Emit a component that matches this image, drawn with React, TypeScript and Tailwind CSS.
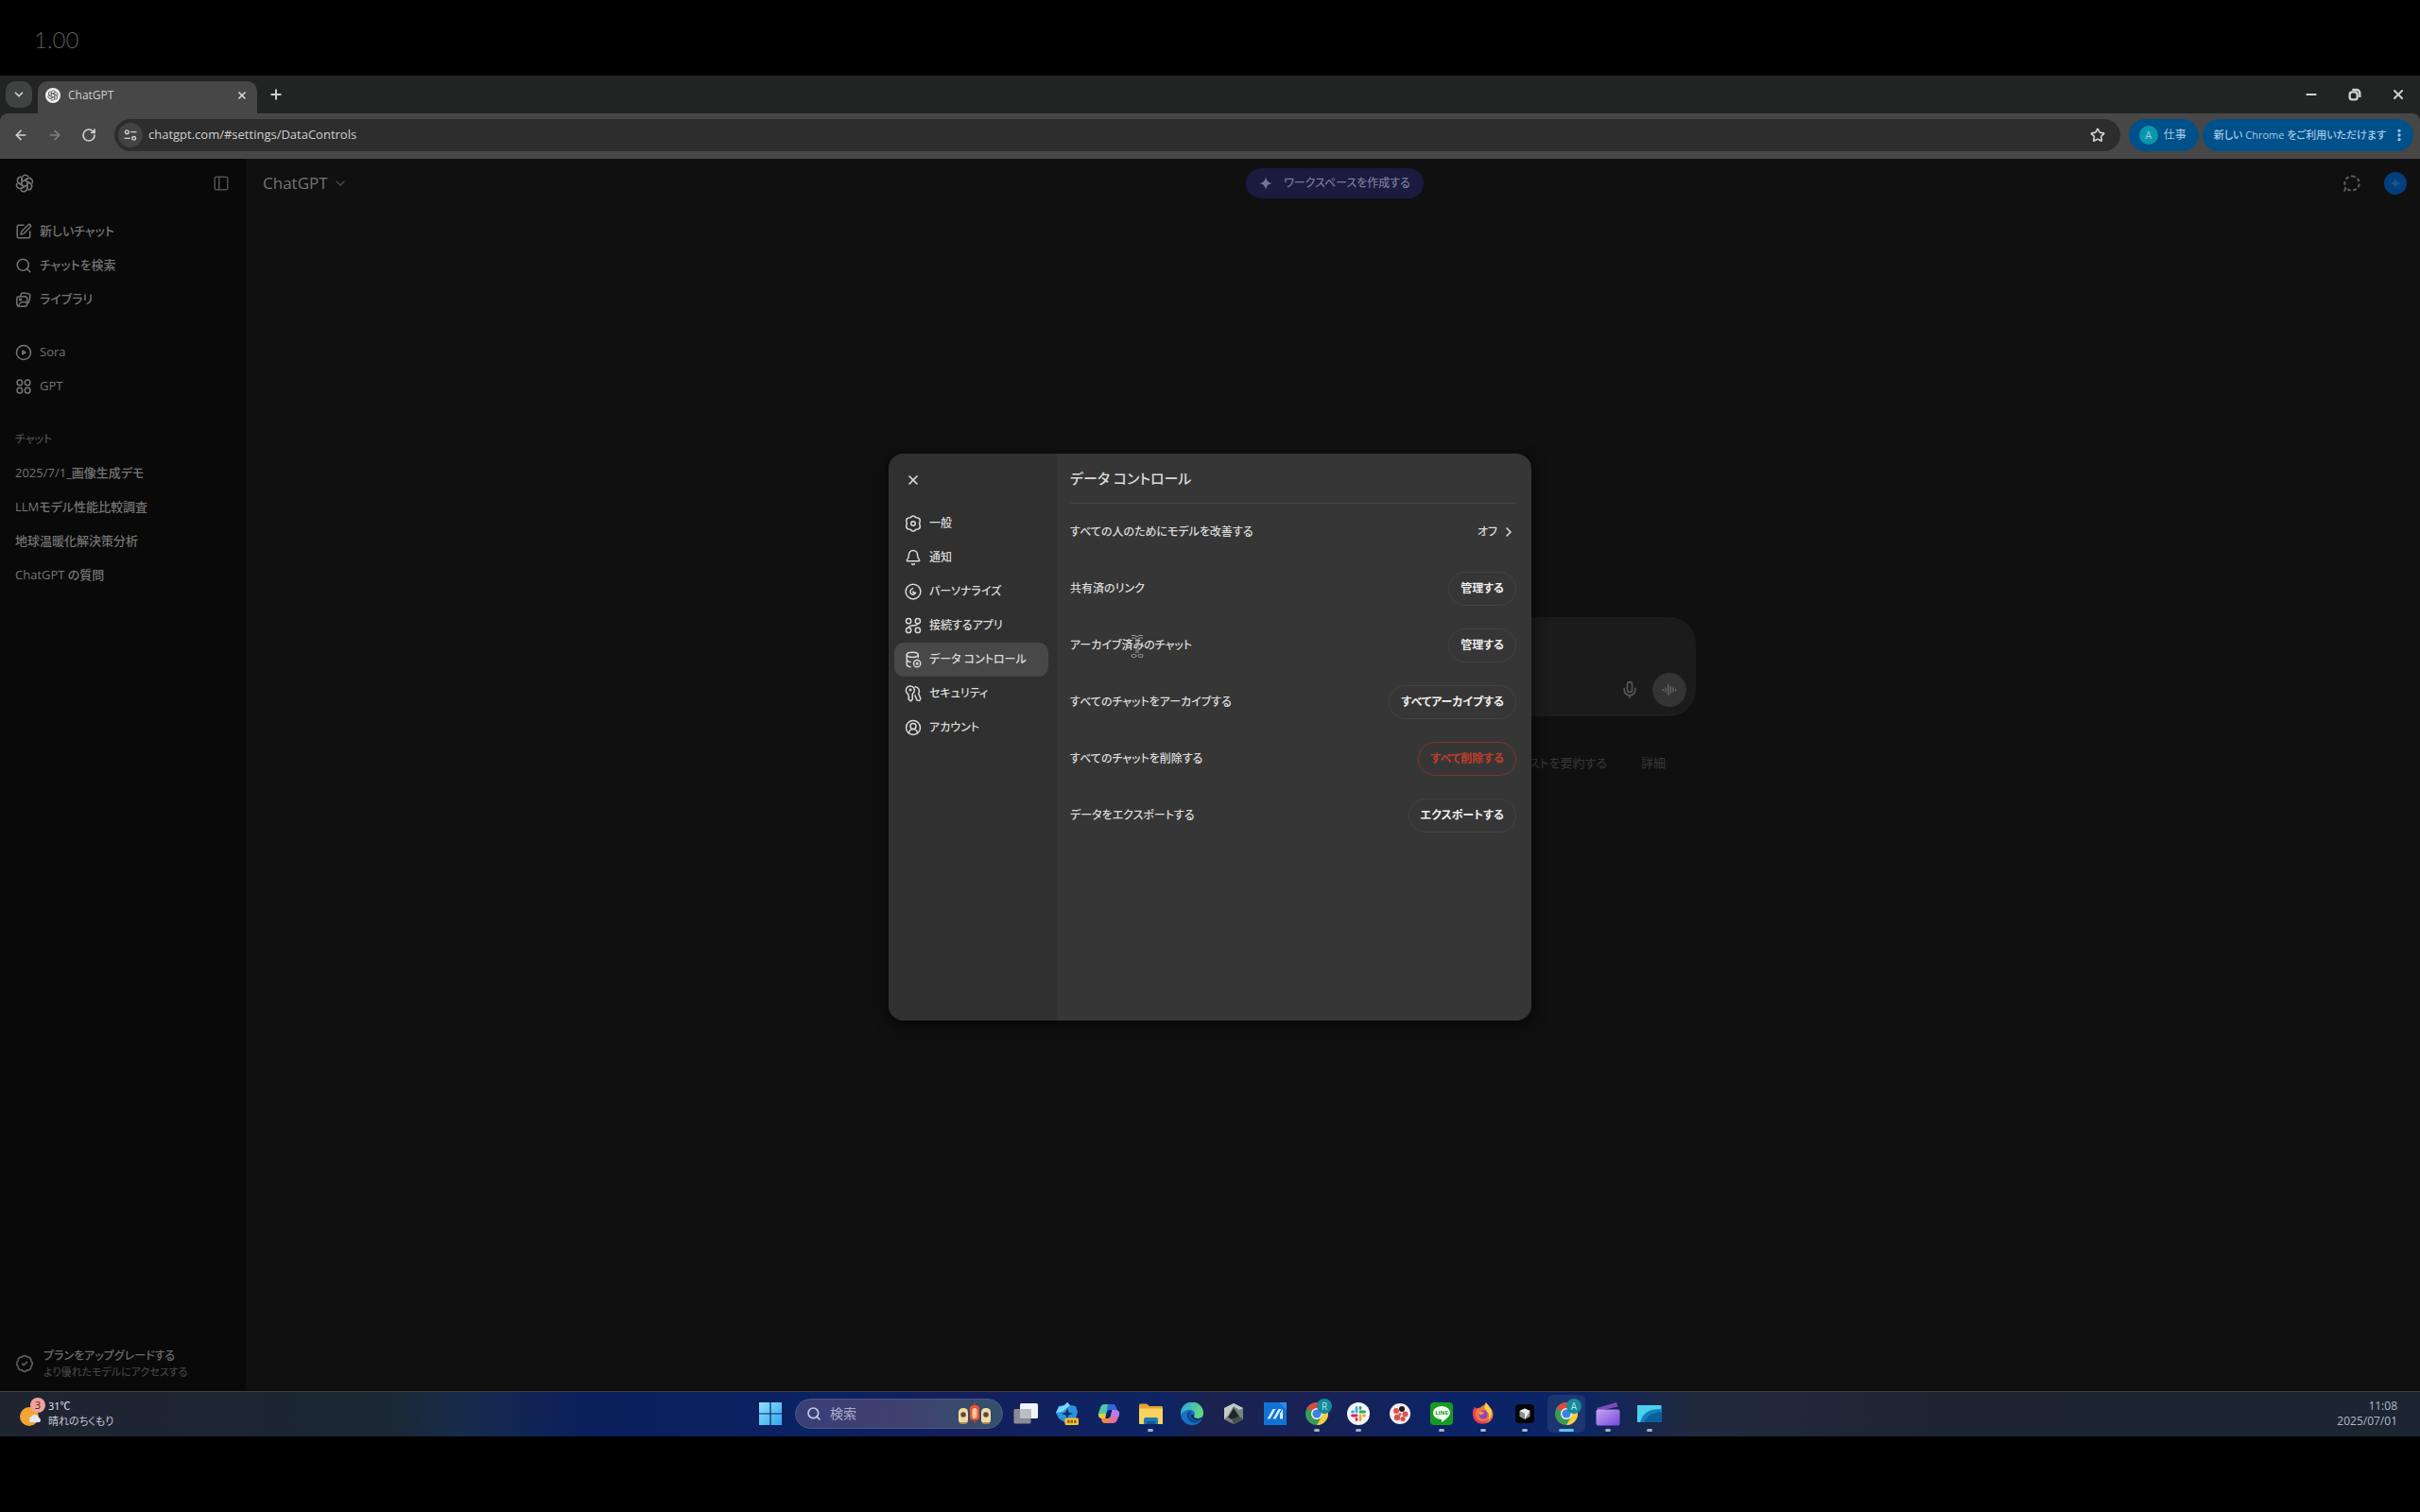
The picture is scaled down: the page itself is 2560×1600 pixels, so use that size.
import type { ReactNode } from 'react';
import {
  ArrowLeft,
  ArrowRight,
  BadgeCheck,
  Bell,
  ChevronDown,
  ChevronRight,
  CircleUserRound,
  EllipsisVertical,
  Mic,
  Minus,
  PanelLeft,
  Plus,
  RotateCw,
  Search,
  SquarePen,
  Star,
  X,
} from 'lucide-react';

interface IconProps {
  className?: string;
}

function Svg({ className, children }: IconProps & { children: ReactNode }) {
  return (
    <svg
      viewBox="0 0 24 24"
      fill="none"
      stroke="currentColor"
      strokeWidth="2"
      strokeLinecap="round"
      strokeLinejoin="round"
      className={className}
      aria-hidden="true"
    >
      {children}
    </svg>
  );
}

function OpenAiLogo({ className }: IconProps) {
  return (
    <Svg className={className}>
      {[0, 60, 120, 180, 240, 300].map(angle => (
        <path
          key={angle}
          transform={`rotate(${angle} 12 12)`}
          d="M12 8 L8.5 10 V5.4 A4.6 4.6 0 0 1 16.4 3 M12 8 L16.8 5.3"
        />
      ))}
    </Svg>
  );
}

function LibraryIcon({ className }: IconProps) {
  return (
    <Svg className={className}>
      <path d="M8 7V5.5A3 3 0 0 1 11.4 2.6l7 .9A3 3 0 0 1 21 7l-.9 7a3 3 0 0 1-2.6 2.6" />
      <rect x="2.5" y="7.5" width="14.5" height="14" rx="3.5" />
      <circle cx="7.5" cy="12" r="1.2" />
      <path d="M5 20.5c1.5-4.5 6-6.5 11.5-4" />
    </Svg>
  );
}

function SoraIcon({ className }: IconProps) {
  return (
    <Svg className={className}>
      <circle cx="12" cy="12" r="10" />
      <path d="M10.500 9.500 14.500 12 10.500 14.500z" fill="currentColor" />
    </Svg>
  );
}

function GptsIcon({ className }: IconProps) {
  return (
    <Svg className={className}>
      <circle cx="6.5" cy="6.5" r="3.7" />
      <circle cx="17.5" cy="6.5" r="3.7" />
      <circle cx="6.5" cy="17.5" r="3.7" />
      <circle cx="17.5" cy="17.5" r="3.7" />
    </Svg>
  );
}

function GeneralIcon({ className }: IconProps) {
  return (
    <Svg className={className}>
      <path d="M10 1.800a4 4 0 0 1 4 0l1.700 1.700 2.700.5c2.400.6 3.600 2.600 3.200 4.600L20.800 12l.8 3.400c.4 2-.8 4-3.200 4.600l-2.700.5L14 22.200a4 4 0 0 1-4 0l-1.700-1.700-2.700-.5c-2.400-.6-3.600-2.600-3.200-4.600L3.200 12l-.8-3.400C2 6.600 3.200 4.600 5.600 4l2.700-.5z" />
      <circle cx="12" cy="12" r="3" />
    </Svg>
  );
}

function PersonalizeIcon({ className }: IconProps) {
  return (
    <Svg className={className}>
      <circle cx="12" cy="12" r="10.5" />
      <path d="M11.500 7.500C8 9 7 12 8.500 14.500s5.500 2.500 7-1h-3.500v-1.500" />
    </Svg>
  );
}

function AppsIcon({ className }: IconProps) {
  return (
    <Svg className={className}>
      <circle cx="5.5" cy="5.5" r="3.5" />
      <circle cx="18.5" cy="5.5" r="3.5" />
      <circle cx="5.5" cy="18.5" r="3.5" />
      <circle cx="18.5" cy="18.5" r="3.5" />
      <path d="M5.500 15c0-5 13-1 13-6" />
    </Svg>
  );
}

function DataIcon({ className }: IconProps) {
  return (
    <Svg className={className}>
      <ellipse cx="11" cy="5" rx="8" ry="3.5" />
      <path d="M3 5v14c0 1.5 2 2.800 5 3.200M19 5v4M3 12c0 1.5 2 2.800 5 3.200" />
      <circle cx="17.5" cy="17.5" r="4.8" />
      <circle cx="17.5" cy="17.5" r="1" />
    </Svg>
  );
}

function SecurityIcon({ className }: IconProps) {
  return (
    <Svg className={className}>
      <path d="M5 12.500A6 6 0 1 1 11 12.300V20l-2.500 2.500L5.500 20v-2l1-1-1-1z" />
      <circle cx="8" cy="6.8" r="1" />
      <path d="M14.500 2.500a6 6 0 0 1 5 9.500l3 7-1.500 3-3.500-.5-3-7" />
    </Svg>
  );
}

function TuneIcon({ className }: IconProps) {
  return (
    <Svg className={className}>
      <circle cx="6.5" cy="7" r="2.8" />
      <path d="M13 7h8M3 17h8" />
      <circle cx="17.5" cy="17" r="2.8" />
    </Svg>
  );
}

function RestoreIcon({ className }: IconProps) {
  return (
    <svg viewBox="0 0 24 24" fill="none" stroke="currentColor" strokeWidth="3.500" className={className} aria-hidden="true">
      <rect x="4" y="8" width="12" height="12" rx="4" />
      <path d="M8 4.500h7a5 5 0 0 1 5 5v7" />
    </svg>
  );
}

function SparkIcon({ className }: IconProps) {
  return (
    <svg viewBox="0 0 24 24" fill="currentColor" className={className} aria-hidden="true">
      <path d="M12 0c1.200 7.500 4.500 10.800 12 12-7.500 1.200-10.800 4.500-12 12-1.200-7.500-4.500-10.800-12-12C7.500 10.800 10.800 7.500 12 0z" />
    </svg>
  );
}

function TemporaryChatIcon({ className }: IconProps) {
  return (
    <svg viewBox="0 0 24 24" fill="none" stroke="currentColor" strokeWidth="2.500" className={className} aria-hidden="true">
      <path d="M12 3a9.500 9 0 1 1-4.500 17L3 21l1-4.500A9.200 9 0 0 1 12 3z" strokeDasharray="4.500 3" />
    </svg>
  );
}

function VoiceIcon({ className }: IconProps) {
  return (
    <Svg className={className}>
      <path d="M2 11v2M6 9v6M10 4v16M14 7v10M18 9v6M22 11v2" />
    </Svg>
  );
}

function TextCursor({ className }: IconProps) {
  return (
    <svg viewBox="0 0 14 26" fill="none" stroke="currentColor" className={className} aria-hidden="true">
      <path d="M1 1.500h4l2 1.500 2-1.500h4M1 4h4l1 1v15M8 20V5l1-1h4" />
      <rect x="1" y="21.5" width="5" height="3" rx="1.5" />
      <rect x="8" y="21.5" width="5" height="3" rx="1.5" />
    </svg>
  );
}

/* ---------- browser chrome ---------- */

function TabStrip() {
  return (
    <div className="flex h-10 items-center bg-[#222423] pl-[6px] text-[#d0d0d0]">
      <button aria-label="タブを検索" className="flex size-7 items-center justify-center rounded-[10px] bg-[#414342]">
        <ChevronDown className="size-3.5" strokeWidth={3} />
      </button>
      <div className="ml-[6px] mt-[6px] flex h-[34px] w-[232px] items-center rounded-t-[10px] bg-[#474747] px-2 pb-1">
        <span className="flex size-4 items-center justify-center rounded-full bg-[#f0f0f0] text-[#666]">
          <OpenAiLogo className="size-3" />
        </span>
        <span className="ml-2 flex-1 text-xs">ChatGPT</span>
        <button aria-label="タブを閉じる" className="pr-[2px]">
          <X className="size-3" strokeWidth={3.5} />
        </button>
      </div>
      <button aria-label="新しいタブ" className="ml-3">
        <Plus className="size-4" strokeWidth={3} />
      </button>
      <div className="ml-auto flex gap-[30px] pr-[15px]">
        <button aria-label="最小化">
          <Minus className="size-4" strokeWidth={3} />
        </button>
        <button aria-label="元に戻す">
          <RestoreIcon className="size-4" />
        </button>
        <button aria-label="閉じる">
          <X className="size-4" strokeWidth={3} />
        </button>
      </div>
    </div>
  );
}

function Toolbar() {
  return (
    <div className="flex h-12 items-center bg-[#222423] text-[#d0d0d0]">
      <div className="flex h-12 flex-1 items-center rounded-t-lg bg-[#474747] pr-[7px] pb-[2px] pl-[14px]">
        <button aria-label="戻る">
          <ArrowLeft className="size-4" strokeWidth={2.5} />
        </button>
        <button aria-label="進む" className="ml-5 text-[#7e7e7e]">
          <ArrowRight className="size-4" strokeWidth={2.5} />
        </button>
        <button aria-label="再読み込み" className="ml-5">
          <RotateCw className="size-4" strokeWidth={2.5} />
        </button>
        <div className="ml-[19px] flex h-[34px] flex-1 items-center rounded-full bg-[#2d2d2d] pr-4 pl-1">
          <span className="flex size-[26px] items-center justify-center rounded-full bg-[#434343]">
            <TuneIcon className="size-4" />
          </span>
          <input
            aria-label="アドレス"
            defaultValue="chatgpt.com/#settings/DataControls"
            className="ml-[6px] flex-1 bg-transparent text-[13px] outline-none"
          />
          <Star className="size-4" strokeWidth={2.5} />
        </div>
        <button className="ml-[9px] flex h-[34px] items-center gap-[6px] rounded-full bg-[#00508a] pr-[13px] pl-[11px] text-xs text-[#a4cbe8]">
          <span className="flex size-5 items-center justify-center rounded-full bg-[#0797a9] text-[11px]">A</span>
          仕事
        </button>
        <button className="ml-1 flex h-[34px] items-center gap-[6px] rounded-full bg-[#00508a] pr-[7px] pl-3 text-[11px] font-medium text-[#a4cbe8]">
          新しい Chrome をご利用いただけます
          <EllipsisVertical className="size-4" strokeWidth={3} />
        </button>
      </div>
    </div>
  );
}

/* ---------- ChatGPT page ---------- */

const primaryLinks = [
  { label: '新しいチャット', icon: SquarePen },
  { label: 'チャットを検索', icon: Search },
  { label: 'ライブラリ', icon: LibraryIcon },
];

const toolLinks = [
  { label: 'Sora', icon: SoraIcon },
  { label: 'GPT', icon: GptsIcon },
];

const chats = ['2025/7/1_画像生成デモ', 'LLMモデル性能比較調査', '地球温暖化解決策分析', 'ChatGPT の質問'];

function SidebarLink({ label, icon: Icon }: { label: string; icon: (props: IconProps) => ReactNode }) {
  return (
    <a href="#" className="flex h-9 items-center gap-2 px-4">
      <Icon className="size-[18px]" />
      {label}
    </a>
  );
}

function Sidebar() {
  return (
    <aside className="flex w-[260px] shrink-0 flex-col bg-[#090909] text-[13px] font-medium text-[#747474]">
      <div className="flex h-[51px] items-center justify-between px-4">
        <OpenAiLogo className="size-5" />
        <button aria-label="サイドバーを閉じる" className="mr-[1px] text-[#505050]">
          <PanelLeft className="size-[18px]" />
        </button>
      </div>
      <nav className="mt-2">
        {primaryLinks.map(link => (
          <SidebarLink key={link.label} label={link.label} icon={link.icon as (props: IconProps) => ReactNode} />
        ))}
      </nav>
      <nav className="mt-5">
        {toolLinks.map(link => (
          <SidebarLink key={link.label} label={link.label} icon={link.icon} />
        ))}
      </nav>
      <h2 className="mt-5 flex h-9 items-center px-4 text-xs text-[#4b4b4b]">チャット</h2>
      {chats.map(chat => (
        <a key={chat} href="#" className="flex h-9 items-center px-4">
          {chat}
        </a>
      ))}
      <a href="#" className="mt-auto flex h-[58px] items-center gap-[10px] px-4">
        <BadgeCheck className="size-5 text-[#5c5c5c]" />
        <span>
          <span className="block text-xs leading-[18px] text-[#6c6c6c]">プランをアップグレードする</span>
          <span className="block text-[11px] leading-4 text-[#414141]">より優れたモデルにアクセスする</span>
        </span>
      </a>
    </aside>
  );
}

function ChatPane() {
  return (
    <main className="flex flex-1 flex-col bg-[#101010]">
      <header className="grid h-[51px] grid-cols-3 items-center pr-[14px] pl-[18px]">
        <button className="flex items-center gap-[5px] justify-self-start text-[17px] text-[#747474]">
          ChatGPT
          <ChevronDown className="size-4 text-[#4a4a4a]" />
        </button>
        <button className="flex h-8 items-center gap-3 justify-self-center rounded-full bg-[#1b1a3f] px-[14px] text-xs font-medium text-[#77779a]">
          <SparkIcon className="size-3.5" />
          ワークスペースを作成する
        </button>
        <div className="flex items-center gap-6 justify-self-end">
          <button aria-label="一時チャット" className="text-[#5a5a5a]">
            <TemporaryChatIcon className="size-5" />
          </button>
          <button aria-label="プロフィール" className="flex size-6 items-center justify-center rounded-full bg-[#003f7c] text-[#16588f]">
            <SparkIcon className="size-3" />
          </button>
        </div>
      </header>
      <div className="mx-auto mt-[434px] w-full max-w-[768px]">
        <form className="flex h-[105px] flex-col rounded-[28px] bg-[#1b1b1b] p-[10px]">
          <textarea aria-label="メッセージ" className="w-full flex-1 resize-none bg-transparent outline-none" />
          <div className="flex items-center justify-end gap-[14px]">
            <button type="button" aria-label="音声入力" className="text-[#585858]">
              <Mic className="size-5" />
            </button>
            <button
              type="button"
              aria-label="音声モード"
              className="flex size-9 items-center justify-center rounded-full bg-[#343434] text-[#6a6a6a]"
            >
              <VoiceIcon className="size-4" />
            </button>
          </div>
        </form>
        <div className="mt-8 flex h-9 items-center justify-end gap-9 pr-8 text-[13px] text-[#383838]">
          <button>テキストを要約する</button>
          <button>詳細</button>
        </div>
      </div>
    </main>
  );
}

/* ---------- settings dialog ---------- */

const settingsTabs = [
  { label: '一般', icon: GeneralIcon },
  { label: '通知', icon: Bell },
  { label: 'パーソナライズ', icon: PersonalizeIcon },
  { label: '接続するアプリ', icon: AppsIcon },
  { label: 'データ コントロール', icon: DataIcon, active: true },
  { label: 'セキュリティ', icon: SecurityIcon },
  { label: 'アカウント', icon: CircleUserRound },
];

const actionRows = [
  { label: '共有済のリンク', action: '管理する' },
  { label: 'アーカイブ済みのチャット', action: '管理する', hovered: true },
  { label: 'すべてのチャットをアーカイブする', action: 'すべてアーカイブする' },
  { label: 'すべてのチャットを削除する', action: 'すべて削除する', danger: true },
  { label: 'データをエクスポートする', action: 'エクスポートする' },
];

function SettingsDialog() {
  return (
    <div
      role="dialog"
      aria-label="設定"
      className="flex min-h-[600px] w-full max-w-[680px] overflow-hidden rounded-2xl bg-[#363636] text-xs font-medium text-[#dadada] shadow-[0_4px_16px_rgba(0,0,0,0.7)]"
    >
      <div className="w-[178px] shrink-0 bg-[#303030] px-[6px]">
        <button aria-label="閉じる" className="flex h-14 items-center px-3">
          <X className="size-4" strokeWidth={2.5} />
        </button>
        <nav>
          {settingsTabs.map(({ label, icon: Icon, active }) => (
            <button
              key={label}
              className={`flex h-9 w-[163px] items-center gap-2 rounded-[10px] px-[11px] whitespace-nowrap ${active ? 'bg-[#484848]' : ''}`}
            >
              <Icon className="size-[18px]" />
              {label}
            </button>
          ))}
        </nav>
      </div>
      <div className="flex-1 pr-4 pl-[14px]">
        <h2 className="flex h-[53px] items-center border-b border-[#434343] text-[15px]">データ コントロール</h2>
        <div className="flex h-[60px] items-center justify-between">
          <span>すべての人のためにモデルを改善する</span>
          <button className="flex items-center gap-1">
            オフ
            <ChevronRight className="size-4" strokeWidth={2.5} />
          </button>
        </div>
        {actionRows.map(row => (
          <div key={row.label} className="flex h-[60px] items-center justify-between">
            <span className="relative">
              {row.label}
              {row.hovered && <TextCursor className="absolute -top-1 left-16 h-[26px] w-[14px] text-[#999]" />}
            </span>
            <button
              className={`h-9 rounded-full border px-3 font-bold ${
                row.danger ? 'border-[#7c3531] text-[#c43c2a]' : 'border-[#424242] text-[#efefef]'
              }`}
            >
              {row.action}
            </button>
          </div>
        ))}
      </div>
    </div>
  );
}

/* ---------- taskbar ---------- */

function WindowsIcon() {
  return (
    <svg viewBox="0 0 24 24" className="size-6">
      <defs>
        <linearGradient id="win" x1="0" y1="0" x2="1" y2="1">
          <stop offset="0" stopColor="#8fe0fb" />
          <stop offset="1" stopColor="#2fa8ee" />
        </linearGradient>
      </defs>
      <path fill="url(#win)" d="M0 0h11.400v11.400H0zM12.600 0H24v11.400H12.600zM0 12.600h11.400V24H0zM12.600 12.600H24V24H12.600z" />
    </svg>
  );
}

function LanternsIcon() {
  return (
    <svg viewBox="0 0 36 24" className="h-6 w-9">
      <rect x="1" y="6" width="10" height="17" rx="4.5" fill="#f0dba4" />
      <rect x="25" y="6" width="10" height="17" rx="4.5" fill="#f0dba4" />
      <circle cx="6" cy="13" r="2.8" fill="#5d4a3a" />
      <circle cx="30" cy="13" r="2.8" fill="#5d4a3a" />
      <path d="M2.500 22h7M26.500 22h7" stroke="#9b6b3c" strokeWidth="1.5" />
      <rect x="13" y="3" width="10" height="16" rx="4" fill="#e2572f" />
      <rect x="15.5" y="6" width="5" height="11" rx="2.5" fill="#f7c3a1" />
      <path d="M18 0v3M18 19v3" stroke="#c44325" strokeWidth="1.5" />
    </svg>
  );
}

function TaskViewIcon() {
  return (
    <svg viewBox="0 0 26 24" className="h-6 w-[26px]">
      <rect x="7" y="1" width="19" height="16" rx="1.5" fill="#f1f3fb" />
      <rect x="0.5" y="7" width="18" height="15.5" rx="1.5" fill="#8a8c93" />
      <path d="M7 7h11.500v10H7z" fill="#bcbec6" />
    </svg>
  );
}

function PreviewIcon() {
  return (
    <svg viewBox="0 0 24 24" className="size-6">
      <path d="M12 0l3 3 6 1 2 6-2 7-9 6-9-6-3-6 3-7 6-1z" fill="#2a93dc" />
      <path d="M12 0l3 3-8 7-7 1 3-6 6-2z" fill="#7fd4f5" />
      <path d="M12 6l1.600 4.400L18 12l-4.400 1.600L12 18l-1.600-4.400L6 12l4.400-1.600z" fill="#0a3477" />
      <rect x="9.5" y="16.5" width="14.5" height="7.5" rx="1.5" fill="#f5bf35" />
      <path d="M12 20.300h9.500" stroke="#8a6513" strokeWidth="3" strokeDasharray="2.500 1" fill="none" />
    </svg>
  );
}

function CopilotIcon() {
  return (
    <svg viewBox="0 0 24 24" className="size-6">
      <path d="M8 2h8c2 0 3 1.500 3.500 3l1 3H13c-2 0-3 1-3.500 3L8 17H5c-3 0-4.500-2.500-4-5l2-6c.8-2.500 2-4 5-4z" fill="#2c9bea" />
      <path d="M1 12l2-6c.8-2.500 2-4 5-4h3L8 17H5c-3 0-4.500-2.500-4-5z" fill="#4ccb9c" />
      <path d="M1 12c0 3 1.500 5 4 5h3l1-5z" fill="#e8c93b" />
      <path d="M11 2h5c2 0 3 1.500 3.500 3l1 3H13c-1.500 0-2.500.6-3 2z" fill="#3268dc" />
      <path d="M16 22H8c-2 0-3-1.500-3.500-3L4 17h6.500c2 0 3-1 3.500-3l1.500-6H19c3 0 4.500 2.500 4 5l-2 5c-.8 2.500-2 4-5 4z" fill="#ea6f98" />
      <path d="M15.500 8H19c3 0 4.500 2.500 4 5l-1 3-8-1z" fill="#b77be8" />
      <path d="M4 17h6.500c1.500 0 2.500-.6 3-2l-2 7H8c-2 0-3-1.500-3.500-3z" fill="#f08b3e" />
    </svg>
  );
}

function FolderIcon() {
  return (
    <svg viewBox="0 0 25 24" className="h-6 w-[25px]">
      <path d="M0 3a1.500 1.500 0 0 1 1.500-1.500H8L11 4h12.500A1.500 1.500 0 0 1 25 5.500V22a1 1 0 0 1-1 1H1a1 1 0 0 1-1-1z" fill="#e2a52f" />
      <path d="M0 6.500h25V22a1 1 0 0 1-1 1H1a1 1 0 0 1-1-1z" fill="#fbd25e" />
      <path d="M5 23v-5a2 2 0 0 1 2-2h11a2 2 0 0 1 2 2v5z" fill="#2277b5" />
      <path d="M8 23v-3h9v3z" fill="#17568e" />
    </svg>
  );
}

function EdgeIcon() {
  return (
    <svg viewBox="0 0 24 24" className="size-6">
      <defs>
        <linearGradient id="edge" x1="0" y1="0" x2="1" y2="0.300">
          <stop offset="0" stopColor="#2aa5e4" />
          <stop offset="1" stopColor="#63d67f" />
        </linearGradient>
      </defs>
      <circle cx="12" cy="12" r="12" fill="#1673c4" />
      <path d="M0 12A12 12 0 0 1 24 11c0 4-3 6-6.500 6-3 0-4-1.500-3-3C16 10 12 6.500 7.500 8 3 9 .5 11 0 14z" fill="url(#edge)" />
      <path d="M8 9.500c-3 4-1 10.500 5 12 3 .6 6-.5 8-3-5 2-11-.5-11-5 0-1.500 1-3 2-3.500z" fill="#0d4a94" />
      <path d="M14 14c-1.500 3 5 4.500 9.500 1.500L22 18c-5 2-11 0-11-4 0-1.500 2-2 3 0z" fill="#10275f" />
    </svg>
  );
}

function CubeIcon() {
  return (
    <svg viewBox="0 0 24 24" className="size-6">
      <path d="M12 1l10 5v12l-10 5-10-5V6z" fill="#77827f" />
      <path d="M12 1L2 6v12l4-4 6-10 6 4 4-2z" fill="#c3cac7" />
      <path d="M12 6l6 9-8 3-4-2z" fill="#1d2928" />
      <path d="M10 18l8-3 4 3-10 5z" fill="#46514f" />
    </svg>
  );
}

function StripesIcon() {
  return (
    <svg viewBox="0 0 24 24" className="size-6">
      <rect width="24" height="24" fill="#1273d6" />
      <path d="M16 0h8v8z" fill="#2b8bea" />
      <path d="M3.500 17.500L9.500 7h3l-6 10.500zM9.500 17.500L15.500 7h3l-6 10.500zM17 17.500V12l3-5v10.500z" fill="#d9ecff" />
    </svg>
  );
}

function ChromeIcon({ initial }: { initial: string }) {
  return (
    <span className="relative">
      <svg viewBox="0 0 24 24" className="size-6">
        <circle cx="12" cy="12" r="12" fill="#3a9c52" />
        <path d="M12 12L1.600 6A12 12 0 0 1 22.400 6H12z" fill="#dc4a3d" />
        <path d="M12 6h10.400A12 12 0 0 1 12 24l5.200-9z" fill="#f8cd3c" />
        <circle cx="12" cy="12" r="6" fill="#f3f6fb" />
        <circle cx="12" cy="12" r="4.6" fill="#3d80e4" />
      </svg>
      <span className="absolute -top-1 -right-1 flex size-4 items-center justify-center rounded-full bg-[#158a9c] text-[10px] text-[#b6e2ea]">
        {initial}
      </span>
    </span>
  );
}

function SlackIcon() {
  return (
    <svg viewBox="0 0 24 24" className="size-6">
      <circle cx="12" cy="12" r="12" fill="#f7f7f7" />
      <g fill="none" strokeWidth="2.8" strokeLinecap="round">
        <path d="M10 5.500v4.500M5.500 10h1" stroke="#36b4dc" />
        <path d="M14 10h4.500M14 5.500v1" stroke="#2da470" />
        <path d="M14 14v4.500M17.500 14h1" stroke="#e4ad35" />
        <path d="M10 14H5.500M10 17.500v1" stroke="#d42a5c" />
      </g>
    </svg>
  );
}

function DotsIcon() {
  return (
    <svg viewBox="0 0 24 24" className="size-6">
      <circle cx="12" cy="12" r="11" fill="#f3efef" />
      <circle cx="14" cy="7" r="3" fill="#1f1a1c" />
      <circle cx="8" cy="9" r="3" fill="#d8544f" />
      <circle cx="17.5" cy="12.5" r="3" fill="#d8544f" />
      <circle cx="9" cy="16" r="3.2" fill="#d8544f" />
      <circle cx="15" cy="17.5" r="2.6" fill="#d8544f" />
      <circle cx="12" cy="12.5" r="1.5" fill="#d8544f" />
    </svg>
  );
}

function LineIcon() {
  return (
    <span className="relative flex size-6 items-center justify-center rounded bg-[#169c22]">
      <svg viewBox="0 0 24 24" className="size-6">
        <path d="M12 4c5 0 9 3 9 7 0 3.500-4 6.500-9 10v-3c-5 0-9-3-9-7s4-7 9-7z" fill="#f2fbf1" />
      </svg>
      <span className="absolute inset-x-0 top-[7px] text-center text-[6px] leading-[8px] font-bold text-[#169c22]">LINE</span>
    </span>
  );
}

function FirefoxIcon() {
  return (
    <svg viewBox="0 0 24 24" className="size-6">
      <path d="M3 5l2 2c1-1 2.500-1.500 4-1.500C10 4 11.500 3 13 3c1-1.500 1.500-2 2-3 1 2 3 3.500 4.500 6 3 2 3.500 7 2.500 10a10.800 10.800 0 0 1-20-.5C0 12 1 8 3 5z" fill="#f4743b" />
      <path d="M15 0c1 2 3 3.500 4.500 6 2.500 3 2 10-2 12 2-5-1-9-4-11.500C13 4 14.500 2 15 0z" fill="#fbd24b" />
      <path d="M3 5l2 2c-2 3-2 7 0 10 3 4 9 4 13 1-4 6-12 6-15.500 0C0 13 1 8 3 5z" fill="#e63a63" />
      <circle cx="12" cy="13" r="4.6" fill="#8b46c4" />
      <path d="M7 11c2-2 4-2 6 0-1 1.500-3 2-4 2.500z" fill="#f99b3c" />
    </svg>
  );
}

function CursorAppIcon() {
  return (
    <svg viewBox="0 0 24 24" className="size-6">
      <rect x="2" y="2" width="20" height="20" rx="4" fill="#050608" />
      <path d="M12 6.500l5.500 2.500v6L12 18l-5.500-3V9z" fill="#8f9092" />
      <path d="M6.500 9l5.500-2.500L17.500 9 12 18v-6.500z" fill="#ececec" />
    </svg>
  );
}

function ClipIcon() {
  return (
    <svg viewBox="0 0 26 25" className="h-[25px] w-[26px]">
      <defs>
        <linearGradient id="clip" x1="0" y1="0" x2="1" y2="1">
          <stop offset="0" stopColor="#c9a4f7" />
          <stop offset="1" stopColor="#7447db" />
        </linearGradient>
      </defs>
      <path d="M1 6L22 0l1.500 4.500L3 9z" fill="#7c4bb7" />
      <rect x="0.5" y="7.5" width="25" height="17" rx="2" fill="url(#clip)" />
    </svg>
  );
}

function DesktopIcon() {
  return (
    <svg viewBox="0 0 26 20" className="h-5 w-[26px]">
      <rect y="1" width="26" height="18" rx="1" fill="#1180bd" />
      <path d="M0 2a1 1 0 0 1 1-1h24v4C12 5 6 9 3 19H1a1 1 0 0 1-1-1z" fill="#4bd1ee" />
      <path d="M26 8v10a1 1 0 0 1-1 1H7C10 12 16 9 26 8z" fill="#0c5f9b" />
    </svg>
  );
}

const taskbarApps: { name: string; icon: ReactNode; running?: boolean; active?: boolean }[] = [
  { name: 'タスク ビュー', icon: <TaskViewIcon /> },
  { name: 'プレビュー', icon: <PreviewIcon /> },
  { name: 'Copilot', icon: <CopilotIcon /> },
  { name: 'エクスプローラー', icon: <FolderIcon />, running: true },
  { name: 'Edge', icon: <EdgeIcon /> },
  { name: 'キューブ', icon: <CubeIcon /> },
  { name: 'アシスタント', icon: <StripesIcon /> },
  { name: 'Chrome 個人', icon: <ChromeIcon initial="R" />, running: true },
  { name: 'Slack', icon: <SlackIcon />, running: true },
  { name: 'チーム', icon: <DotsIcon /> },
  { name: 'LINE', icon: <LineIcon />, running: true },
  { name: 'Firefox', icon: <FirefoxIcon />, running: true },
  { name: 'Cursor', icon: <CursorAppIcon />, running: true },
  { name: 'Chrome 仕事', icon: <ChromeIcon initial="A" />, active: true },
  { name: 'Clipchamp', icon: <ClipIcon />, running: true },
  { name: 'リモート デスクトップ', icon: <DesktopIcon />, running: true },
];

function Taskbar() {
  return (
    <footer className="grid h-12 grid-cols-[1fr_auto_1fr] items-center border-t border-[#3a3f4a] bg-[linear-gradient(90deg,#1f2431_0%,#1b2734_16%,#182c4b_19%,#0b1f5c_24%,#0b2263_34%,#141f5c_40%,#0d2464_48%,#1b2250_50%,#16225a_56%,#0b2468_60%,#0b2466_65%,#222a3e_70%,#1d2533_80%,#1c2532_100%)] pb-[1px]">
      <div className="flex items-center gap-[3px] pl-5 text-[11px] leading-4 text-[#c4c9d2]">
        <span className="relative">
          <svg viewBox="0 0 28 30" className="h-[30px] w-7">
            <circle cx="11" cy="18" r="10" fill="#f2a631" />
            <path d="M12 24a4 4 0 0 1 1-6 4.500 4.500 0 0 1 8 1 3 3 0 0 1 1 5z" fill="#dfe8f8" />
          </svg>
          <span className="absolute -top-0.5 right-0 flex size-4 items-center justify-center rounded-full bg-[#f2a29c] text-[#4b1f1f]">
            3
          </span>
        </span>
        <span>
          <span className="block text-[#e4e7ec]">31℃</span>
          <span className="block">晴れのちくもり</span>
        </span>
      </div>
      <div className="flex items-center">
        <button aria-label="スタート" className="flex w-11 justify-center">
          <WindowsIcon />
        </button>
        <label className="mr-0.5 ml-1 flex h-8 w-[220px] items-center rounded-full border border-[#4c5687] bg-[linear-gradient(90deg,#3a3f78,#40406f_50%,#34506c)] pr-[11px] pl-[11px]">
          <Search className="size-4 text-[#c5cbe6]" strokeWidth={2.5} />
          <input
            aria-label="検索"
            placeholder="検索"
            className="ml-[9px] w-0 flex-1 bg-transparent text-sm outline-none placeholder:text-[#a9aecb]"
          />
          <LanternsIcon />
        </label>
        {taskbarApps.map(app => (
          <button
            key={app.name}
            aria-label={app.name}
            className="relative flex h-[46px] w-11 items-center justify-center"
          >
            <span
              className={`flex size-10 items-center justify-center rounded-md ${app.active ? 'bg-[#1d3570]' : ''}`}
            >
              {app.icon}
            </span>
            {app.running && <span className="absolute bottom-1 h-[3px] w-[6px] rounded-full bg-[#a9afc6]" />}
            {app.active && <span className="absolute bottom-1 h-[3px] w-4 rounded-full bg-[#63bdec]" />}
          </button>
        ))}
      </div>
      <div className="pr-6 text-right text-xs leading-4 text-[#b4bac4]">
        <div>11:08</div>
        <div>2025/07/01</div>
      </div>
    </footer>
  );
}

export default function App() {
  return (
    <div className="flex min-h-screen flex-col bg-black font-['Open_Sans','Noto_Sans_CJK_JP',sans-serif] [font-feature-settings:'palt']">
      <div className="flex h-20 items-center pt-1 pl-9 font-[Lato,sans-serif] text-2xl font-light text-[#5c5c5c]">1.00</div>
      <TabStrip />
      <Toolbar />
      <div className="relative flex flex-1">
        <Sidebar />
        <ChatPane />
        {/* sits a little above the middle of the page */}
        <div className="absolute inset-0 flex items-center justify-center pb-20">
          <SettingsDialog />
        </div>
      </div>
      <Taskbar />
      <div className="h-20" />
    </div>
  );
}
